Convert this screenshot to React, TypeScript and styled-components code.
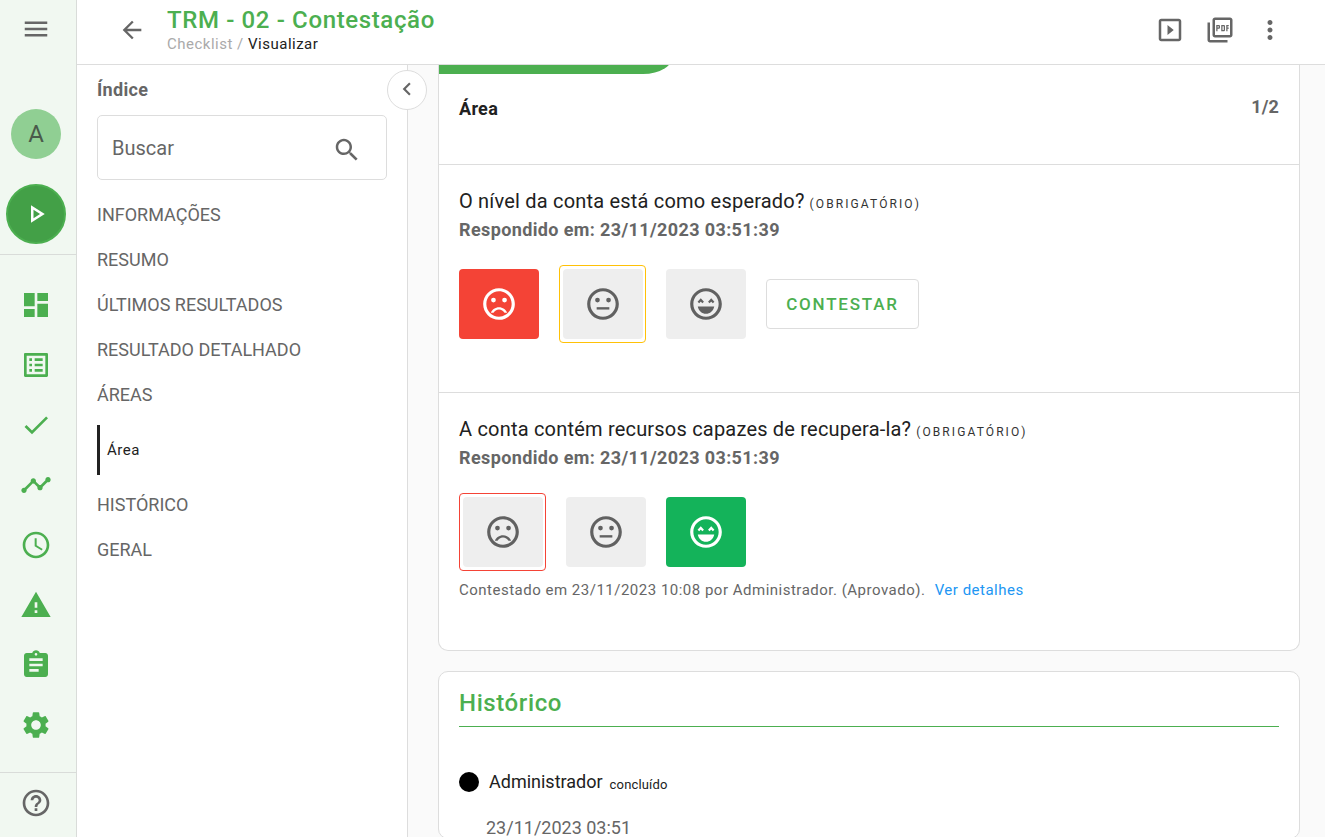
import React from 'react';
import styled, { createGlobalStyle } from 'styled-components';

const Global = createGlobalStyle`
  html, body { margin: 0; padding: 0; height: 100%; overflow: hidden; background: #fff; }
  * { box-sizing: border-box; }
  body { font-family: Roboto, "Noto Sans", sans-serif; color: #212121; }
`;

const Shell = styled.div`display: flex; width: 1325px; height: 837px; overflow: hidden;`;
const Rail = styled.nav`
  width: 77px; flex: none; height: 100%; background: #f1f8f1; border-right: 1px solid #d9dcd9;
  display: flex; flex-direction: column; align-items: flex-start;
`;
const RailTop = styled.div`height: 58px; width: 72px; display: flex; align-items: center; justify-content: center; color: #666;`;
const Avatar = styled.div`
  margin: 51px 0 0 11px; width: 50px; height: 50px; border-radius: 50%; background: #90cf93; color: #4a5a4b;
  display: flex; align-items: center; justify-content: center; font-size: 24px; line-height: 1;
`;
const PlayBtn = styled.div`
  margin: 25px 0 0 6px; width: 60px; height: 60px; border-radius: 50%; background: #43a047; border: 2px solid #4caf50;
  color: #fff; display: flex; align-items: center; justify-content: center;
`;
const RailDivider = styled.div`width: 100%; height: 1px; background: #d9dcd9; flex: none; margin-top: ${p => p.$top}px;`;
const RailItems = styled.div`display: flex; flex-direction: column; margin: 20px 0 0 6px;`;
const RailItem = styled.div`width: 60px; height: 60px; display: flex; align-items: center; justify-content: center; color: #4caf50;`;
const HelpItem = styled.div`height: 60px; width: 72px; display: flex; align-items: center; justify-content: center; color: #666;`;

const Main = styled.div`flex: 1; min-width: 0; display: flex; flex-direction: column; height: 100%;`;
const Header = styled.header`
  height: 65px; flex: none; border-bottom: 1px solid #ddd; display: flex; align-items: center; background: #fff; padding-left: 41px;
`;
const BackIcon = styled.div`width: 28px; height: 28px; color: #666; display: flex; margin: -5px 21px 0 0;`;
const TitleBox = styled.div`flex: 1; align-self: flex-start; padding-top: 6px; display: flex; flex-direction: column;`;
const Title = styled.div`font-size: 24px; line-height: 28px; font-weight: 500; color: #4caf50; letter-spacing: 0.63px;`;
const Crumbs = styled.div`font-size: 15px; line-height: 16px; letter-spacing: 0.5px; color: #aaa; margin-top: 2px;`;
const CrumbNow = styled.span`color: #212121;`;
const Actions = styled.div`display: flex; align-items: center; gap: 20px; padding-right: 40px; color: #666; margin-top: -4px;`;

const Body = styled.div`flex: 1; min-height: 0; display: flex;`;
const IndexPanel = styled.aside`
  width: 331px; flex: none; position: relative; border-right: 1px solid #ddd; background: #fff; padding: 13px 20px 0;
`;
const IndexTitle = styled.div`font-size: 18px; line-height: 24px; font-weight: 700; color: #666; letter-spacing: 0.3px;`;
const SearchBox = styled.div`
  margin-top: 13px; height: 65px; width: 290px; border: 1px solid #ddd; border-radius: 5px; display: flex; align-items: center;
  justify-content: space-between; padding: 0 24px 0 14px; color: #666; font-size: 20px;
`;
const SearchIcon = styled.span`display: flex; margin-top: 4px;`;
const MenuList = styled.div`display: flex; flex-direction: column; margin-top: 12px;`;
const MenuItem = styled.div`height: 45px; display: flex; align-items: center; font-size: 18px; color: #666;`;
const SubItem = styled.div`
  height: 50px; margin: 8px 0 7px; border-left: 3px solid #222; padding-left: 7px; display: flex; align-items: center; font-size: 15px; letter-spacing: 0.5px; color: #212121;
`;
const Collapse = styled.div`
  position: absolute; left: 310px; top: 5px; width: 40px; height: 40px; border-radius: 50%; background: #fff; border: 1px solid #ddd;
  display: flex; align-items: center; justify-content: center; color: #666;
`;
const CollapseGlyph = styled.span`display: flex; margin-top: -3px;`;

const Content = styled.main`flex: 1; min-width: 0; background: #fafafa; padding: 0 25px 0 30px; overflow: hidden;`;
const AreaCard = styled.section`
  background: #fff; border: 1px solid #ddd; border-top: 0; border-radius: 0 0 10px 10px;
`;
const Progress = styled.div`
  height: 20px; margin-top: -11px; width: 235px; background: #4caf50; border-radius: 0 0 31px 0 / 0 0 20px 0;
`;
const AreaHead = styled.div`height: 91px; display: flex; justify-content: space-between; padding: 23px 20px 0; font-weight: 700; font-size: 18px; line-height: 24px; letter-spacing: 0.3px; border-bottom: 1px solid #ddd;`;
const AreaCount = styled.span`color: #666; font-size: 18px; letter-spacing: 0.1px; margin-top: -2px;`;
const Question = styled.div`padding: 24px 20px ${p => p.$bottom}px; border-bottom: ${p => (p.$last ? '0' : '1px solid #ddd')};`;
const QTitle = styled.div`font-size: 20px; line-height: 24px; letter-spacing: 0.2px; color: #212121;`;
const Req = styled.span`font-size: 12px; letter-spacing: 2.1px; margin-left: 5px; color: #333;`;
const Answered = styled.div`font-size: 18px; line-height: 24px; font-weight: 700; letter-spacing: 0.38px; color: #666; margin-top: 2px;`;
const Faces = styled.div`display: flex; align-items: center; gap: 20px; margin-top: 23px; height: 78px;`;
const FaceRing = styled.div`padding: 3px 2px 3px 3px; border: 1px solid ${p => p.$color}; border-radius: 4px; display: flex;`;
const FaceBtn = styled.div`
  width: 80px; height: 70px; border-radius: 4px; background: ${p => p.$bg || '#eee'}; color: ${p => (p.$bg ? '#fff' : '#616161')};
  display: flex; align-items: center; justify-content: center;
`;
const Contest = styled.div`
  width: 153px; height: 50px; border: 1px solid #ddd; border-radius: 4px; color: #4caf50; font-weight: 500; font-size: 17px; letter-spacing: 1.8px;
  display: flex; align-items: center; justify-content: center; background: #fff;
`;
const Note = styled.div`margin-top: 9px; font-size: 15px; line-height: 20px; letter-spacing: 0.5px; color: #666;`;
const NoteLink = styled.a`color: #2196f3; margin-left: 5px;`;

const HistoryCard = styled.section`
  margin-top: 20px; background: #fff; border: 1px solid #ddd; border-radius: 10px; padding: 15px 20px 0;
`;
const HistoryTitle = styled.h2`
  margin: 0; font-size: 24px; line-height: 33px; font-weight: 500; letter-spacing: 0.6px; color: #4caf50; padding-bottom: 6px; border-bottom: 1px solid #4caf50;
`;
const HistoryRow = styled.div`display: flex; align-items: center; margin-top: 45px; height: 20px;`;
const Dot = styled.div`width: 20px; height: 20px; border-radius: 50%; background: #000; flex: none;`;
const Who = styled.span`font-size: 18px; color: #212121; margin: -2px 0 0 10px;`;
const Status = styled.span`font-size: 13px; letter-spacing: 0.15px; color: #212121; margin: 4px 0 0 7px;`;
const When = styled.div`font-size: 18px; color: #666; margin: 26px 0 0 27px; line-height: 20px;`;

const Icon = ({ size, d, children }: { size: number; d?: string; children?: React.ReactNode }) => (
  <svg width={size} height={size} viewBox="0 0 24 24" fill="currentColor" style={{ display: 'block' }}>
    {d && <path d={d} />}
    {children}
  </svg>
);

const P = {
  menu: 'M3 18h18v-2H3v2zm0-5h18v-2H3v2zm0-7v2h18V6H3z',
  back: 'M20 11H7.83l5.59-5.59L12 4l-8 8 8 8 1.41-1.41L7.83 13H20v-2z',
  search: 'M15.5 14h-.79l-.28-.27C15.41 12.59 16 11.11 16 9.5 16 5.91 13.09 3 9.5 3S3 5.91 3 9.5 5.91 16 9.5 16c1.61 0 3.09-.59 4.23-1.57l.27.28v.79l5 4.99L20.49 19l-4.99-5zm-6 0C7.01 14 5 11.99 5 9.5S7.01 5 9.5 5 14 7.01 14 9.5 11.99 14 9.5 14z',
  play: 'M10 8.64L15.27 12 10 15.36V8.64M8 5v14l11-7L8 5z',
  dash: 'M3 13h8V3H3v10zm0 8h8v-6H3v6zm10 0h8V11h-8v10zm0-18v6h8V3h-8z',
  list: 'M19 5v14H5V5h14m1.1-2H3.9c-.5 0-.9.4-.9.9v16.2c0 .4.4.9.9.9h16.2c.4 0 .9-.5.9-.9V3.9c0-.5-.5-.9-.9-.9zM11 7h6v2h-6V7zm0 4h6v2h-6v-2zm0 4h6v2h-6zM7 7h2v2H7zm0 4h2v2H7zm0 4h2v2H7z',
  check: 'M9 16.17L4.83 12l-1.42 1.41L9 19 21 7l-1.41-1.41z',
  timeline: 'M23 8c0 1.1-.9 2-2 2-.18 0-.35-.02-.51-.07l-3.56 3.55c.05.16.07.34.07.52 0 1.1-.9 2-2 2s-2-.9-2-2c0-.18.02-.36.07-.52l-2.55-2.55c-.16.05-.34.07-.52.07s-.36-.02-.52-.07l-4.55 4.56c.05.16.07.33.07.51 0 1.1-.9 2-2 2s-2-.9-2-2 .9-2 2-2c.18 0 .35.02.51.07l4.56-4.55C8.02 9.36 8 9.18 8 9c0-1.1.9-2 2-2s2 .9 2 2c0 .18-.02.36-.07.52l2.55 2.55c.16-.05.34-.07.52-.07s.36.02.52.07l3.55-3.56C19.02 8.35 19 8.18 19 8c0-1.1.9-2 2-2s2 .9 2 2z',
  clock: 'M11.99 2C6.47 2 2 6.48 2 12s4.47 10 9.99 10C17.52 22 22 17.52 22 12S17.52 2 11.99 2zM12 20c-4.42 0-8-3.58-8-8s3.58-8 8-8 8 3.58 8 8-3.58 8-8 8zm.5-13H11v6l5.25 3.15.75-1.23-4.5-2.67z',
  warn: 'M1 21h22L12 2 1 21zm12-3h-2v-2h2v2zm0-4h-2v-4h2v4z',
  assign: 'M19 3h-4.18C14.4 1.84 13.3 1 12 1c-1.3 0-2.4.84-2.82 2H5c-1.1 0-2 .9-2 2v14c0 1.1.9 2 2 2h14c1.1 0 2-.9 2-2V5c0-1.1-.9-2-2-2zm-7 0c.55 0 1 .45 1 1s-.45 1-1 1-1-.45-1-1 .45-1 1-1zm2 14H7v-2h7v2zm3-4H7v-2h10v2zm0-4H7V7h10v2z',
  gear: 'M19.14 12.94c.04-.3.06-.61.06-.94 0-.32-.02-.64-.07-.94l2.03-1.58c.18-.14.23-.41.12-.61l-1.92-3.32c-.12-.22-.37-.29-.59-.22l-2.39.96c-.5-.38-1.03-.7-1.62-.94l-.36-2.54c-.04-.24-.24-.41-.48-.41h-3.84c-.24 0-.43.17-.47.41l-.36 2.54c-.59.24-1.13.57-1.62.94l-2.39-.96c-.22-.08-.47 0-.59.22L2.74 8.87c-.12.21-.08.47.12.61l2.03 1.58c-.05.3-.09.63-.09.94s.02.64.07.94l-2.03 1.58c-.18.14-.23.41-.12.61l1.92 3.32c.12.22.37.29.59.22l2.39-.96c.5.38 1.03.7 1.62.94l.36 2.54c.05.24.24.41.48.41h3.84c.24 0 .44-.17.47-.41l.36-2.54c.59-.24 1.13-.56 1.62-.94l2.39.96c.22.08.47 0 .59-.22l1.92-3.32c.12-.22.07-.47-.12-.61l-2.01-1.58zM12 15.6c-1.98 0-3.6-1.62-3.6-3.6s1.62-3.6 3.6-3.6 3.6 1.62 3.6 3.6-1.62 3.6-3.6 3.6z',
  help: 'M11 18h2v-2h-2v2zm1-16C6.48 2 2 6.48 2 12s4.48 10 10 10 10-4.48 10-10S17.52 2 12 2zm0 18c-4.41 0-8-3.59-8-8s3.59-8 8-8 8 3.59 8 8-3.59 8-8 8zm0-14c-2.21 0-4 1.79-4 4h2c0-1.1.9-2 2-2s2 .9 2 2c0 2-3 1.75-3 5h2c0-2.25 3-2.5 3-5 0-2.21-1.79-4-4-4z',
  slides: 'M10 8v8l5-4-5-4zm9-5H5c-1.1 0-2 .9-2 2v14c0 1.1.9 2 2 2h14c1.1 0 2-.9 2-2V5c0-1.1-.9-2-2-2zm0 16H5V5h14v14z',
  pdf: 'M20 2H8c-1.1 0-2 .9-2 2v12c0 1.1.9 2 2 2h12c1.1 0 2-.9 2-2V4c0-1.1-.9-2-2-2zm0 14H8V4h12v12zM4 6H2v14c0 1.1.9 2 2 2h14v-2H4V6zm12 6V9c0-.55-.45-1-1-1h-2v5h2c.55 0 1-.45 1-1zm-2-3h1v3h-1V9zm4 2h1v-1h-1V9h1V8h-2v5h1zm-8 0h1c.55 0 1-.45 1-1V9c0-.55-.45-1-1-1H9v5h1v-2zm0-2h1v1h-1V9z',
  more: 'M12 8c1.1 0 2-.9 2-2s-.9-2-2-2-2 .9-2 2 .9 2 2 2zm0 2c-1.1 0-2 .9-2 2s.9 2 2 2 2-.9 2-2-.9-2-2-2zm0 6c-1.1 0-2 .9-2 2s.9 2 2 2 2-.9 2-2-.9-2-2-2z',
  chevron: 'M15.41 7.41L14 6l-6 6 6 6 1.41-1.41L10.83 12z',
  ring: 'M11.99 2C6.47 2 2 6.48 2 12s4.47 10 9.99 10C17.52 22 22 17.52 22 12S17.52 2 11.99 2zM12 20c-4.42 0-8-3.58-8-8s3.58-8 8-8 8 3.58 8 8-3.58 8-8 8z',
};

const Sad = () => (
  <Icon size={38} d={P.ring}>
    <circle cx="15.5" cy="9.5" r="1.5" />
    <circle cx="8.5" cy="9.5" r="1.5" />
    <path d="M12 14c-2.33 0-4.32 1.45-5.12 3.5h1.67c.69-1.19 1.97-2 3.45-2s2.75.81 3.45 2h1.67c-.8-2.05-2.79-3.5-5.12-3.5z" />
  </Icon>
);
const Neutral = () => (
  <Icon size={38} d={P.ring}>
    <circle cx="15.5" cy="9.5" r="1.5" />
    <circle cx="8.5" cy="9.5" r="1.5" />
    <path d="M8 14h8v1.5H8z" />
  </Icon>
);
const Happy = () => (
  <Icon size={38} d={P.ring}>
    <path d="M7.200 11l1.500-1.600L10.200 11M13.800 11l1.500-1.600L16.800 11" fill="none" stroke="currentColor" strokeWidth="1.4" />
    <path d="M6.800 13.600h10.400c-.5 2.800-2.700 4.600-5.200 4.600s-4.700-1.800-5.200-4.600z" />
  </Icon>
);

const railIcons = [P.dash, P.list, P.check, P.timeline, P.clock, P.warn, P.assign, P.gear];
const menuTop = ['INFORMAÇÕES', 'RESUMO', 'ÚLTIMOS RESULTADOS', 'RESULTADO DETALHADO', 'ÁREAS'];
const menuBottom = ['HISTÓRICO', 'GERAL'];

export default function App() {
  return (
    <Shell>
      <Global />
      <Rail>
        <RailTop><Icon size={30} d={P.menu} /></RailTop>
        <Avatar>A</Avatar>
        <PlayBtn><Icon size={30} d={P.play} /></PlayBtn>
        <RailDivider $top={10} />
        <RailItems>
          {railIcons.map((d, i) => (
            <RailItem key={i}><Icon size={32} d={d} /></RailItem>
          ))}
        </RailItems>
        <RailDivider $top={17} />
        <HelpItem><Icon size={32} d={P.help} /></HelpItem>
      </Rail>
      <Main>
        <Header>
          <BackIcon><Icon size={28} d={P.back} /></BackIcon>
          <TitleBox>
            <Title>TRM - 02 - Contestação</Title>
            <Crumbs>Checklist / <CrumbNow>Visualizar</CrumbNow></Crumbs>
          </TitleBox>
          <Actions>
            <Icon size={30} d={P.slides} />
            <Icon size={30} d={P.pdf} />
            <Icon size={30} d={P.more} />
          </Actions>
        </Header>
        <Body>
          <IndexPanel>
            <IndexTitle>Índice</IndexTitle>
            <Collapse><CollapseGlyph><Icon size={26} d={P.chevron} /></CollapseGlyph></Collapse>
            <SearchBox>
              Buscar
              <SearchIcon><Icon size={30} d={P.search} /></SearchIcon>
            </SearchBox>
            <MenuList>
              {menuTop.map(m => <MenuItem key={m}>{m}</MenuItem>)}
              <SubItem>Área</SubItem>
              {menuBottom.map(m => <MenuItem key={m}>{m}</MenuItem>)}
            </MenuList>
          </IndexPanel>
          <Content>
            <AreaCard>
              <Progress />
              <AreaHead>
                <span>Área</span>
                <AreaCount>1/2</AreaCount>
              </AreaHead>
              <Question $bottom={49}>
                <QTitle>O nível da conta está como esperado?<Req>(OBRIGATÓRIO)</Req></QTitle>
                <Answered>Respondido em: 23/11/2023 03:51:39</Answered>
                <Faces>
                  <FaceBtn $bg="#f44336"><Sad /></FaceBtn>
                  <FaceRing $color="#ffc107"><FaceBtn><Neutral /></FaceBtn></FaceRing>
                  <FaceBtn><Happy /></FaceBtn>
                  <Contest>CONTESTAR</Contest>
                </Faces>
              </Question>
              <Question $bottom={50} $last>
                <QTitle>A conta contém recursos capazes de recupera-la?<Req>(OBRIGATÓRIO)</Req></QTitle>
                <Answered>Respondido em: 23/11/2023 03:51:39</Answered>
                <Faces>
                  <FaceRing $color="#f44336"><FaceBtn><Sad /></FaceBtn></FaceRing>
                  <FaceBtn><Neutral /></FaceBtn>
                  <FaceBtn $bg="#14b35a"><Happy /></FaceBtn>
                </Faces>
                <Note>
                  Contestado em 23/11/2023 10:08 por Administrador. (Aprovado). <NoteLink>Ver detalhes</NoteLink>
                </Note>
              </Question>
            </AreaCard>
            <HistoryCard>
              <HistoryTitle>Histórico</HistoryTitle>
              <HistoryRow>
                <Dot />
                <Who>Administrador</Who>
                <Status>concluído</Status>
              </HistoryRow>
              <When>23/11/2023 03:51</When>
            </HistoryCard>
          </Content>
        </Body>
      </Main>
    </Shell>
  );
}
